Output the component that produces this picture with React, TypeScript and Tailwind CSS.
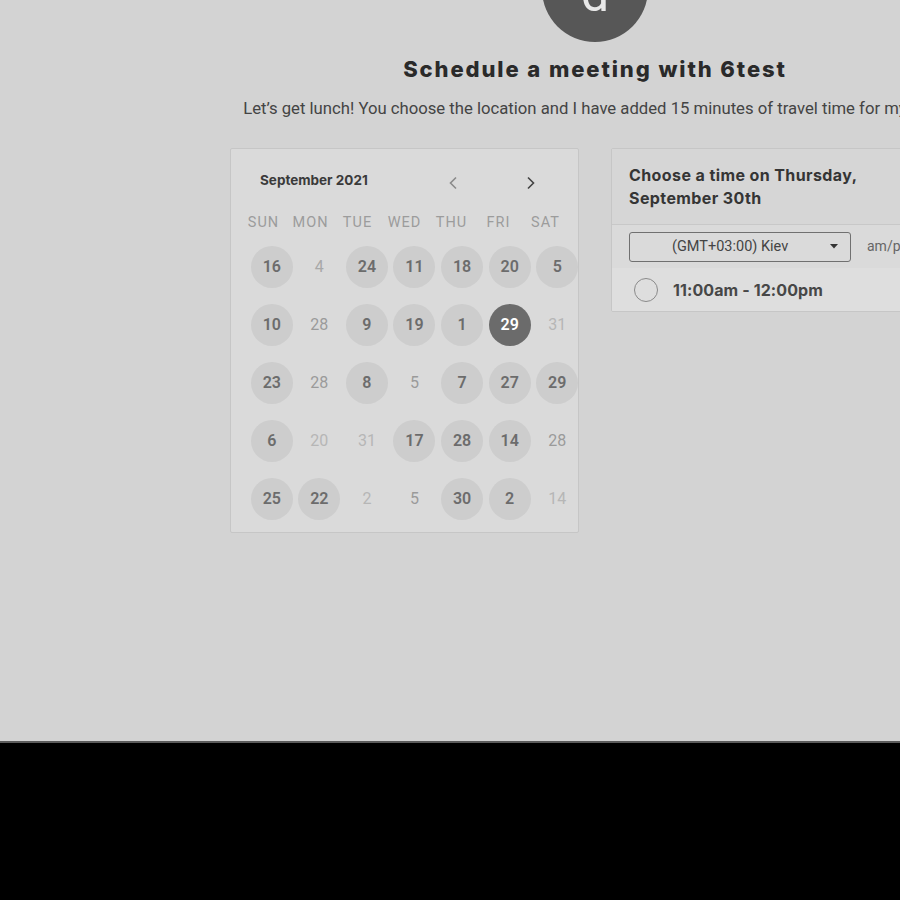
import React from "react";

type Day = { n: number; kind: "open" | "plain" | "muted" | "faint" | "selected" };

const WEEKDAYS = ["SUN", "MON", "TUE", "WED", "THU", "FRI", "SAT"];

const ROWS: Day[][] = [
  [
    { n: 16, kind: "open" },
    { n: 4, kind: "muted" },
    { n: 24, kind: "open" },
    { n: 11, kind: "open" },
    { n: 18, kind: "open" },
    { n: 20, kind: "open" },
    { n: 5, kind: "open" },
  ],
  [
    { n: 10, kind: "open" },
    { n: 28, kind: "plain" },
    { n: 9, kind: "open" },
    { n: 19, kind: "open" },
    { n: 1, kind: "open" },
    { n: 29, kind: "selected" },
    { n: 31, kind: "faint" },
  ],
  [
    { n: 23, kind: "open" },
    { n: 28, kind: "plain" },
    { n: 8, kind: "open" },
    { n: 5, kind: "plain" },
    { n: 7, kind: "open" },
    { n: 27, kind: "open" },
    { n: 29, kind: "open" },
  ],
  [
    { n: 6, kind: "open" },
    { n: 20, kind: "faint" },
    { n: 31, kind: "faint" },
    { n: 17, kind: "open" },
    { n: 28, kind: "open" },
    { n: 14, kind: "open" },
    { n: 28, kind: "plain" },
  ],
  [
    { n: 25, kind: "open" },
    { n: 22, kind: "open" },
    { n: 2, kind: "faint" },
    { n: 5, kind: "plain" },
    { n: 30, kind: "open" },
    { n: 2, kind: "open" },
    { n: 14, kind: "faint" },
  ],
];

function DayCell({ day }: { day: Day }) {
  if (day.kind === "selected") {
    return (
      <div className="flex h-[42px] w-[42px] items-center justify-center rounded-full bg-[#6b6b6b] text-[16px] font-semibold text-white">
        {day.n}
      </div>
    );
  }
  if (day.kind === "open") {
    return (
      <div className="flex h-[42px] w-[42px] items-center justify-center rounded-full bg-[#cdcdcd] text-[16px] font-semibold text-[#6c6c6c]">
        {day.n}
      </div>
    );
  }
  const tone =
    day.kind === "plain" ? "text-[#9a9a9a]" : day.kind === "muted" ? "text-[#a8a8a8]" : "text-[#b6b6b6]";
  return (
    <div className={`flex h-[42px] w-[42px] items-center justify-center text-[16px] ${tone}`}>{day.n}</div>
  );
}

function Calendar() {
  return (
    <div className="w-[349px] shrink-0 rounded-[2px] border border-[#c6c6c6] bg-[#dadada] pb-[12px] pl-[17px]">
      <div className="flex h-[62px] items-center pl-[12px] pr-[42px]">
        <span className="font-['Inter'] text-[13.5px] font-bold text-[#3a3a3a]">September 2021</span>
        <div className="ml-auto flex items-center gap-[68px] pt-[6px]">
          <svg width="10" height="14" viewBox="0 0 10 14" fill="none">
            <path d="M8 1.5 2.5 7 8 12.5" stroke="#8a8a8a" strokeWidth="1.6" />
          </svg>
          <svg width="10" height="14" viewBox="0 0 10 14" fill="none">
            <path d="M2 1.5 7.5 7 2 12.5" stroke="#444" strokeWidth="1.6" />
          </svg>
        </div>
      </div>
      <div className="-ml-[8px] grid w-[329px] grid-cols-7 pt-[1px] pb-[12px] text-center text-[14.5px] tracking-[1px] text-[#9c9c9c]">
        {WEEKDAYS.map((d) => (
          <span key={d}>{d}</span>
        ))}
      </div>
      <div className="flex w-[333px] flex-col gap-[16px]">
        {ROWS.map((row, i) => (
          <div key={i} className="grid grid-cols-7">
            {row.map((day, j) => (
              <div key={j} className="flex justify-center">
                <DayCell day={day} />
              </div>
            ))}
          </div>
        ))}
      </div>
    </div>
  );
}

function TimePanel() {
  return (
    <div className="w-[349px] shrink-0 self-start overflow-hidden rounded-[2px] border border-[#c6c6c6] bg-[#dcdcdc]">
      <div className="border-b border-[#c8c8c8] bg-[#d6d6d6] px-[17px] pt-[15px] pb-[14px] font-['Inter'] text-[16px] leading-[23px] font-bold tracking-[0.4px] text-[#353535]">
        Choose a time on Thursday,
        <br />
        September 30th
      </div>
      <div className="flex h-[43px] items-center bg-[#dadada] px-[17px]">
        <div className="flex h-[30px] w-[222px] items-center rounded-[3px] border border-[#707070] pl-[42px] pr-[12px] text-[14.5px] text-[#444]">
          <span>(GMT+03:00) Kiev</span>
          <svg className="ml-auto" width="8" height="5" viewBox="0 0 8 5">
            <path d="M0 0h8L4 4.5z" fill="#333" />
          </svg>
        </div>
        <span className="ml-[16px] text-[14px] text-[#666]">am/pm</span>
      </div>
      <div className="flex h-[43px] items-center bg-[#dedede] px-[22px]">
        <div className="h-[24px] w-[24px] rounded-full border-[1.5px] border-[#8a8a8a]" />
        <span className="ml-[15px] font-['Inter'] text-[16px] font-bold tracking-[0.1px] text-[#474747]">
          11:00am - 12:00pm
        </span>
      </div>
    </div>
  );
}

export default function App() {
  return (
    <div className="h-[900px] w-[900px] overflow-hidden bg-black font-['Roboto',sans-serif]">
      <div className="h-[743px] overflow-hidden border-b-2 border-[#5c5c5c] bg-[#d3d3d3]">
        <div className="flex w-[1190px] flex-col items-center">
          <div className="-mt-[64px] flex h-[106px] w-[106px] items-center justify-center rounded-full bg-[#575757] pt-[10px] font-['Roboto'] text-[50px] text-[#e8e8e8]">
            d
          </div>
          <h1 className="mt-[13px] font-['Inter'] text-[22px] leading-[28px] font-extrabold tracking-[1.9px] text-[#2a2a2a]">
            Schedule a meeting with 6test
          </h1>
          <p className="mt-[16px] text-[16.7px] leading-[20px] text-[#444]">
            Let’s get lunch! You choose the location and I have added 15 minutes of travel time for myself.&nbsp;&nbsp;
          </p>
          <div className="mt-[29px] flex w-[730px] gap-[32px]">
            <Calendar />
            <TimePanel />
          </div>
        </div>
      </div>
    </div>
  );
}
